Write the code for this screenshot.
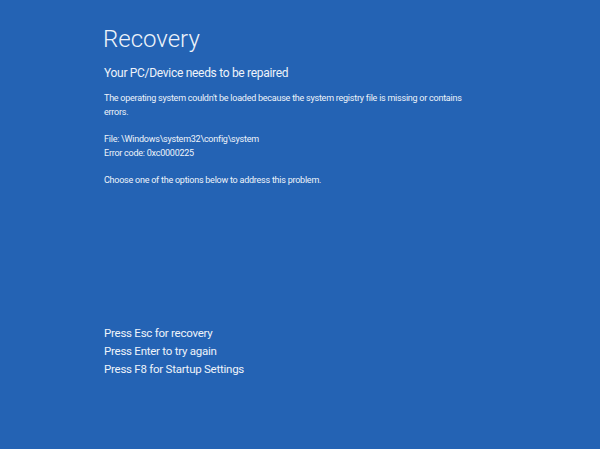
import React from 'react';

const App: React.FC = () => {
  return (
    <div
      className="w-[600px] h-[449px] overflow-hidden bg-[#2463b4] text-[#eef3fa] pl-[104px] pt-[22px]"
      style={{ fontFamily: 'Roboto, "Open Sans", sans-serif' }}
    >
      <h1 className="text-[24px] leading-[34px] font-light -ml-[1px]">Recovery</h1>
      <h2 className="mt-[8px] text-[12px] leading-[18px] tracking-[-0.3px]">Your PC/Device needs to be repaired</h2>

      <div className="mt-[9px] text-[9px] leading-[14px] tracking-[-0.24px] w-[440px]">
        <p>
          The operating system couldn't be loaded because the system registry file is missing or contains
          <br />
          errors.
        </p>
        <p className="mt-[13px]">File: \Windows\system32\config\system</p>
        <p>Error code: 0xc0000225</p>
        <p className="mt-[13px]">Choose one of the options below to address this problem.</p>
      </div>

      <div className="mt-[137px] text-[11.5px] leading-[18px] tracking-[-0.25px]">
        <p>Press Esc for recovery</p>
        <p>Press Enter to try again</p>
        <p>Press F8 for Startup Settings</p>
      </div>
    </div>
  );
};

export default App;
